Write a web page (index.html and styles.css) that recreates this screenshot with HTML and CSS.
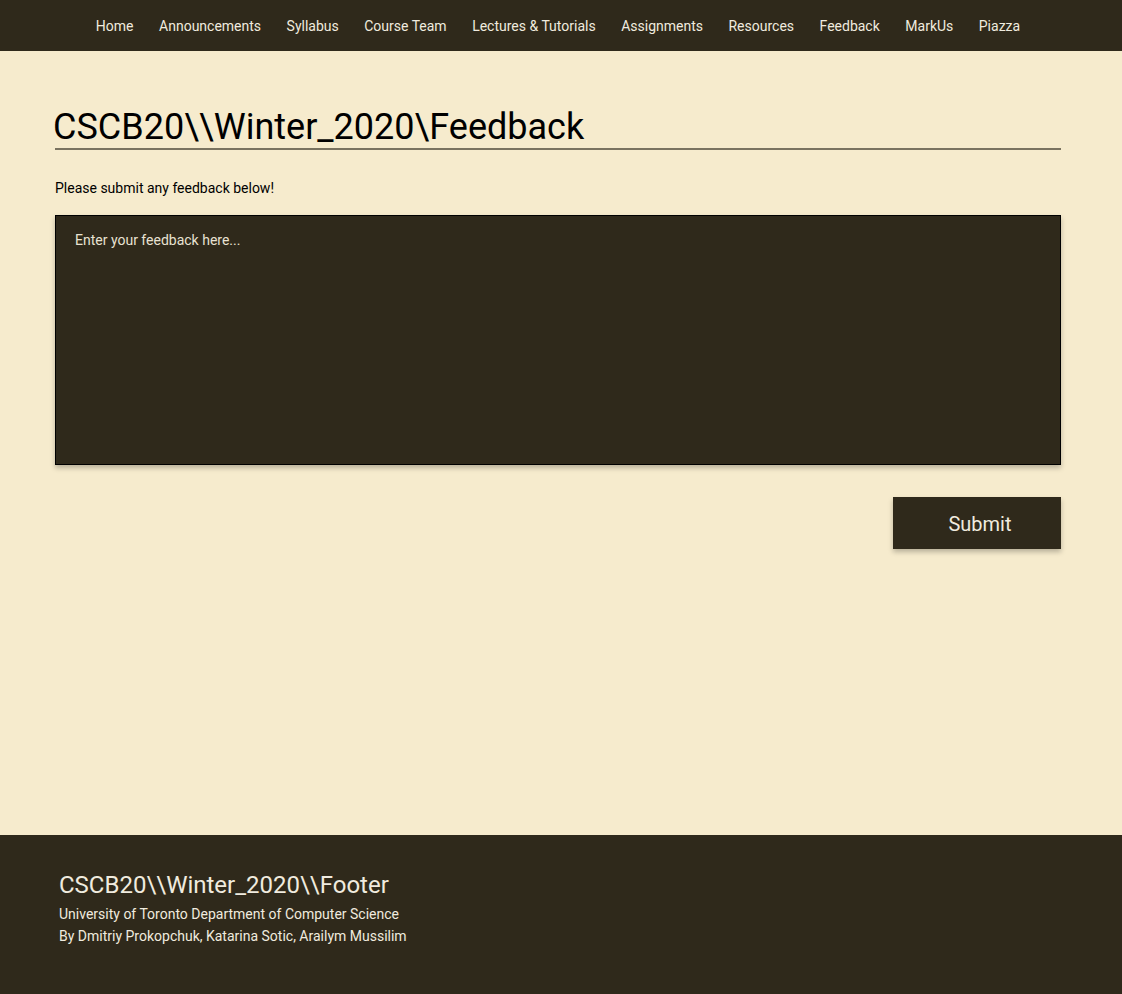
FILE: index.html
```html
<!DOCTYPE html>
<html lang="en">
<head>
<meta charset="utf-8">
<title>CSCB20 Feedback</title>
<link rel="stylesheet" href="styles.css">
</head>
<body>
<nav class="topnav">
  <a href="#">Home</a>
  <a href="#">Announcements</a>
  <a href="#">Syllabus</a>
  <a href="#">Course Team</a>
  <a href="#">Lectures &amp; Tutorials</a>
  <a href="#">Assignments</a>
  <a href="#">Resources</a>
  <a href="#">Feedback</a>
  <a href="#">MarkUs</a>
  <a href="#">Piazza</a>
</nav>
<main class="content">
  <h1 class="title">CSCB20\\Winter_2020\Feedback</h1>
  <p class="intro">Please submit any feedback below!</p>
  <form class="feedback-form">
    <textarea class="feedback-box" placeholder="Enter your feedback here..."></textarea>
    <div class="actions">
      <button type="button" class="submit-btn">Submit</button>
    </div>
  </form>
</main>
<footer class="footer">
  <div class="footer-title">CSCB20\\Winter_2020\\Footer</div>
  <div class="footer-lines">
    <div class="footer-line">University of Toronto Department of Computer Science</div>
    <div class="footer-line">By Dmitriy Prokopchuk, Katarina Sotic, Arailym Mussilim</div>
  </div>
</footer>
</body>
</html>
```
FILE: styles.css
```css
* { box-sizing: border-box; }
html, body { margin: 0; padding: 0; }
body {
  background: #f6ebcd;
  font-family: Roboto, "Liberation Sans", sans-serif;
  color: #000;
  min-height: 994px;
  display: flex;
  flex-direction: column;
}
.topnav {
  height: 51px;
  background: #2f291b;
  display: flex;
  justify-content: center;
  align-items: center;
  gap: 25.5px;
  padding-right: 6px;
}
.topnav a {
  color: #f0ebdf;
  text-decoration: none;
  font-size: 14px;
  line-height: 16px;
  padding-top: 1px;
}
.content {
  flex: 1;
  padding: 55px 61px 0 55px;
}
.title {
  margin: 0;
  font-size: 36px;
  font-weight: 400;
  line-height: 42px;
  text-indent: -2px;
  border-bottom: 2px solid #7a7360;
}
.intro {
  margin: 28px 0 0;
  font-size: 14px;
  line-height: 20px;
}
.feedback-form { margin-top: 17px; }
.feedback-box {
  display: block;
  width: 100%;
  height: 250px;
  background: #2f291b;
  border: 1px solid #000;
  box-shadow: 0 3px 5px rgba(0,0,0,0.25);
  color: #f0ebdf;
  font-family: Roboto, "Liberation Sans", sans-serif;
  font-size: 14px;
  padding: 16px 19px;
  resize: none;
  outline: none;
}
.feedback-box::placeholder { color: #e8e2d2; opacity: 1; }
.actions {
  display: flex;
  justify-content: flex-end;
  margin-top: 32px;
}
.submit-btn {
  width: 168px;
  height: 52px;
  background: #2f291b;
  color: #f0ebdf;
  border: none;
  padding: 2px 0 0 6px;
  font-family: Roboto, "Liberation Sans", sans-serif;
  font-size: 20px;
  box-shadow: 0 3px 5px rgba(0,0,0,0.25);
  cursor: pointer;
}
.footer {
  height: 159px;
  background: #2f291b;
  color: #f0ebdf;
  padding: 36px 59px 0;
}
.footer-title {
  font-size: 24px;
  line-height: 28px;
}
.footer-lines { margin-top: 4px; }
.footer-line {
  font-size: 14px;
  line-height: 22px;
}
```
